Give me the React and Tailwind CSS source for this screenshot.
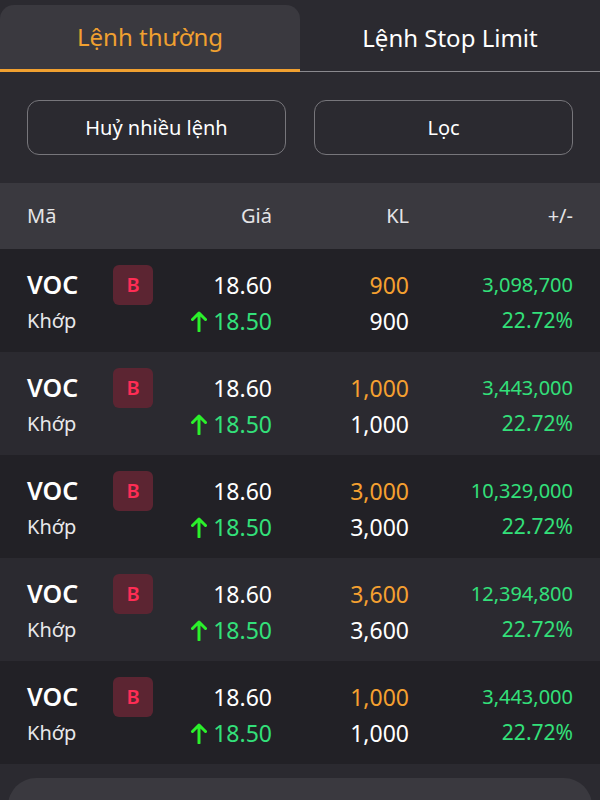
import React from 'react';

const rows = [
  { kl: '900', total: '3,098,700' },
  { kl: '1,000', total: '3,443,000' },
  { kl: '3,000', total: '10,329,000' },
  { kl: '3,600', total: '12,394,800' },
  { kl: '1,000', total: '3,443,000' },
];

function UpArrow() {
  return (
    <svg width="16" height="22" viewBox="0 0 16 22" fill="none" className="mr-[6px]">
      <path d="M8 21V3M1.5 9.5L8 3l6.5 6.5" stroke="#2bf02b" strokeWidth="3" strokeLinecap="round" strokeLinejoin="round" />
    </svg>
  );
}

function OrderRow({ item, dark }) {
  return (
    <div className={`shrink-0 grid grid-cols-[86px_159px_137px_164px] px-[27px] pt-[18px] pb-[13px] ${dark ? 'bg-[#222126]' : 'bg-[#2b2a30]'}`}>
      <div className="flex flex-col">
        <div className="h-[36px] flex items-center text-[25px] font-semibold text-white">VOC</div>
        <div className="h-[36px] flex items-center text-[20px] text-[#e8e8ea]">Khớp</div>
      </div>
      <div className="flex flex-col">
        <div className="h-[36px] flex items-center justify-between">
          <div className="w-[40px] h-[40px] rounded-[6px] bg-[#5c2532] flex items-center justify-center text-[20px] font-semibold text-[#ff2d55]">B</div>
          <span className="text-[23px] text-white">18.60</span>
        </div>
        <div className="h-[36px] flex items-center justify-end text-[23px] text-[#33e07a]">
          <UpArrow />
          18.50
        </div>
      </div>
      <div className="flex flex-col items-end">
        <div className="h-[36px] flex items-center text-[23px] text-[#f5a030]">{item.kl}</div>
        <div className="h-[36px] flex items-center text-[23px] text-white">{item.kl}</div>
      </div>
      <div className="flex flex-col items-end">
        <div className="h-[36px] flex items-center text-[20px] text-[#33e07a]">{item.total}</div>
        <div className="h-[36px] flex items-center text-[21px] text-[#33e07a]">22.72%</div>
      </div>
    </div>
  );
}

export default function App() {
  return (
    <div className="w-[600px] h-[800px] overflow-hidden bg-[#2b2a30] font-['Noto_Sans',sans-serif] flex flex-col">
      {/* tabs */}
      <div className="shrink-0 flex pt-[5px]">
        <div className="w-[300px] h-[67px] bg-[#3a393f] rounded-t-[14px] border-b-[3px] border-[#f0a030] flex items-center justify-center text-[24px] text-[#f0a030]">
          Lệnh thường
        </div>
        <div className="flex-1 h-[67px] border-b border-[#8a898e] flex items-center justify-center text-[24px] text-white">
          Lệnh Stop Limit
        </div>
      </div>

      {/* actions */}
      <div className="shrink-0 flex gap-[28px] px-[27px] pt-[28px] pb-[28px]">
        <button className="flex-1 h-[55px] rounded-[12px] border border-[#77767b] text-[20px] text-white">Huỷ nhiều lệnh</button>
        <button className="flex-1 h-[55px] rounded-[12px] border border-[#77767b] text-[20px] text-white">Lọc</button>
      </div>

      {/* header */}
      <div className="shrink-0 grid grid-cols-[86px_159px_137px_164px] px-[27px] h-[66px] items-center bg-[#3a393f] text-[20px] text-[#e4e4e6]">
        <span>Mã</span>
        <span className="text-right">Giá</span>
        <span className="text-right">KL</span>
        <span className="text-right">+/-</span>
      </div>

      {rows.map((r, i) => (
        <OrderRow key={i} item={r} dark={i % 2 === 0} />
      ))}

      <div className="shrink-0 mt-[14px] mx-[8px] h-[60px] rounded-t-[28px] bg-[#3a393f]" />
    </div>
  );
}
